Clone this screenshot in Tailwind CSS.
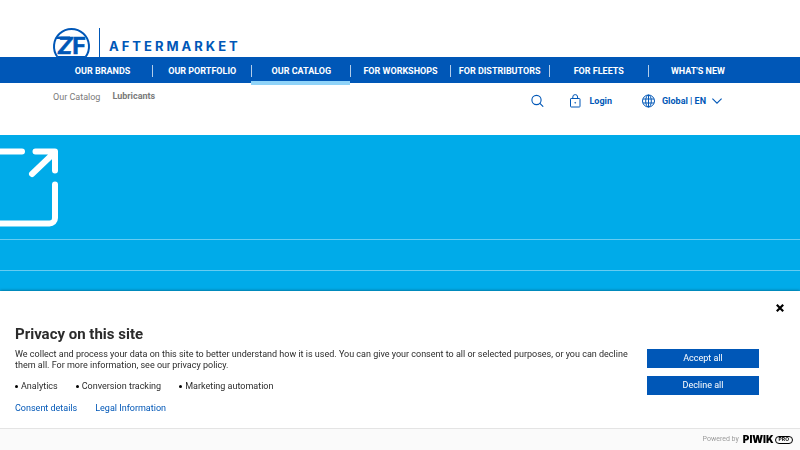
<!DOCTYPE html>
<html lang="en">
<head>
  <meta charset="UTF-8">
  <meta name="viewport" content="width=device-width, initial-scale=1.0">
  <title>Lubricants - ZF Aftermarket</title>
  <script src="https://cdn.jsdelivr.net/npm/@tailwindcss/browser@4"></script>
</head>
<body class="h-screen overflow-hidden bg-white font-['Roboto',sans-serif] text-[9px] leading-[11px] text-[#2b2b2b]">

  <div class="flex h-full flex-col">
    <!-- Logo -->
    <header class="flex h-[57px] shrink-0 items-start px-[53px] pt-7">
      <a href="#" class="flex items-start text-[#0057b7]" aria-label="ZF Aftermarket">
        <svg class="h-[29px] w-[37px] overflow-visible" viewBox="0 0 37 29" fill="none">
          <path d="M4.500 29A17.500 17.500 0 1 1 32.500 29" stroke="currentColor" stroke-width="2"/>
          <path d="M4 8.500H17v2.500H3zM5 28H32V29H5z" fill="currentColor"/>
          <text x="5" y="26" font-family="Roboto, sans-serif" font-weight="700" font-size="24" fill="currentColor" stroke="currentColor" stroke-width=".5"><tspan font-style="italic">Z</tspan><tspan>F</tspan></text>
        </svg>
        <span class="ml-[9px] h-[29px] w-px bg-[#0057b7]"></span>
        <span class="ml-[9px] mt-2.5 font-['Inter',sans-serif] text-[13px] leading-4 font-bold tracking-[3px]">AFTERMARKET</span>
      </a>
    </header>

    <!-- Main navigation -->
    <nav class="h-[26px] shrink-0 bg-[#0057b7] px-[53px]">
      <ul class="grid h-full grid-cols-7 pt-0.5 text-center font-bold text-white">
        <li class="flex items-center"><a href="#" class="grow">OUR BRANDS</a></li>
        <li class="flex items-center"><span class="h-3 w-px bg-white/70"></span><a href="#" class="grow">OUR PORTFOLIO</a></li>
        <li class="relative flex items-center"><span class="h-3 w-px bg-white/70"></span><a href="#" class="grow">OUR CATALOG</a><span class="absolute inset-x-0 -bottom-0.5 h-1 bg-[#8fd3f8]"></span></li>
        <li class="flex items-center"><span class="h-3 w-px bg-white/70"></span><a href="#" class="grow">FOR WORKSHOPS</a></li>
        <li class="flex items-center"><span class="h-3 w-px bg-white/70"></span><a href="#" class="grow">FOR DISTRIBUTORS</a></li>
        <li class="flex items-center"><span class="h-3 w-px bg-white/70"></span><a href="#" class="grow">FOR FLEETS</a></li>
        <li class="flex items-center"><span class="h-3 w-px bg-white/70"></span><a href="#" class="grow">WHAT'S NEW</a></li>
      </ul>
    </nav>

    <!-- Breadcrumb and tools -->
    <div class="flex h-[52px] shrink-0 items-start justify-between pl-[53px] pr-[78px]">
      <div class="flex gap-3 pt-2 text-[#7a7a7a]">
        <a href="#" class="pt-px">Our Catalog</a>
        <span class="font-bold">Lubricants</span>
      </div>
      <div class="flex items-center pt-[11px] font-bold text-[#0057b7]">
        <button type="button" aria-label="Search">
          <svg class="h-3.5 w-3.5" viewBox="0 0 14 14" fill="none" stroke="currentColor" stroke-width="1.1" stroke-linecap="round">
            <circle cx="6.500" cy="6" r="4.600"/><path d="M9.900 9.400l3 3"/>
          </svg>
        </button>
        <a href="#" class="ml-6 flex items-center gap-[7px]">
          <svg class="h-3.5 w-3.5" viewBox="0 0 14 14" fill="none" stroke="currentColor">
            <rect x="2.500" y="4.500" width="9.500" height="8.500" rx=".6"/><path d="M4.800 4.500V3a2.400 2.400 0 0 1 4.800 0v1.500"/><circle cx="7.200" cy="8.800" r=".4"/>
          </svg>
          Login
        </a>
        <button type="button" class="ml-[29px] flex items-center">
          <svg class="h-3.5 w-3.5" viewBox="0 0 14 14" fill="none" stroke="currentColor">
            <circle cx="7.500" cy="7" r="6"/><ellipse cx="7.500" cy="7" rx="2.800" ry="6"/><path d="M2 5h11M2 9h11M7.500 1v12"/>
          </svg>
          <span class="ml-[7px]">Global | EN</span>
          <svg class="ml-1.5 h-1.5 w-2.5" viewBox="0 0 10 6" fill="none" stroke="currentColor" stroke-width="1.1"><path d="M.4.6L5 5.200 9.600.6"/></svg>
        </button>
      </div>
    </div>

    <!-- Hero tiles -->
    <main class="grow overflow-hidden bg-[#00abe9]">
      <div class="h-[105px] border-b border-white/40 pt-3">
        <svg class="h-20 w-[60px]" viewBox="0 0 60 80" fill="none" stroke="#fff" stroke-width="6" stroke-linecap="round" stroke-linejoin="round">
          <path d="M-5 4.500H22M35.500 4.500H55V23.500M54 6L32 27M55 37.500V71a5.500 5.500 0 0 1-5.500 5.500H-5"/>
        </svg>
      </div>
      <div class="h-[31px] border-b border-white/40"></div>
    </main>
  </div>

  <!-- Consent banner -->
  <section class="fixed inset-x-0 bottom-0 bg-white shadow-[0_0_3px_rgba(0,0,0,0.5)]">
    <button type="button" class="absolute right-4 top-[13px]" aria-label="Close">
      <svg class="h-2 w-2" viewBox="0 0 8 8" stroke="#000" stroke-width="2.200"><path d="M.8.8l6.400 6.400M7.200.8L.8 7.200"/></svg>
    </button>
    <div class="flex items-start justify-between pl-[15px] pr-[41px] pt-[34px] pb-3.5">
      <div class="max-w-[632px]">
        <h2 class="text-[15px] leading-[18px] font-bold">Privacy on this site</h2>
        <p class="mt-1.5">We collect and process your data on this site to better understand how it is used. You can give your consent to all or selected purposes, or you can decline them all. For more information, see our privacy policy.</p>
        <ul class="mt-2.5 flex gap-[18px]">
          <li class="flex items-center gap-[3px]"><span class="h-[3px] w-[3px] rounded-full bg-black"></span>Analytics</li>
          <li class="flex items-center gap-[3px]"><span class="h-[3px] w-[3px] rounded-full bg-black"></span>Conversion tracking</li>
          <li class="flex items-center gap-[3px]"><span class="h-[3px] w-[3px] rounded-full bg-black"></span>Marketing automation</li>
        </ul>
        <div class="mt-[11px] flex gap-[18px] text-[#0057b7]">
          <a href="#">Consent details</a>
          <a href="#">Legal Information</a>
        </div>
      </div>
      <div class="mt-6 flex w-28 shrink-0 flex-col gap-2 text-white">
        <button type="button" class="h-[19px] bg-[#0057b7]">Accept all</button>
        <button type="button" class="h-[19px] bg-[#0057b7]">Decline all</button>
      </div>
    </div>
    <footer class="flex h-[22px] items-center justify-end border-t border-[#e4e4e4] bg-[#fafafa] pr-[7px] text-[7px] text-[#9b9b9b]">
      Powered by
      <a href="#" class="ml-1 flex items-center gap-px text-black">
        <span class="font-['Inter',sans-serif] text-[10px] font-black">PIWIK</span>
        <span class="flex h-2 items-center rounded-full border border-black px-[3px] font-['Inter',sans-serif] text-[5px] font-bold">PRO</span>
      </a>
    </footer>
  </section>

</body>
</html>
